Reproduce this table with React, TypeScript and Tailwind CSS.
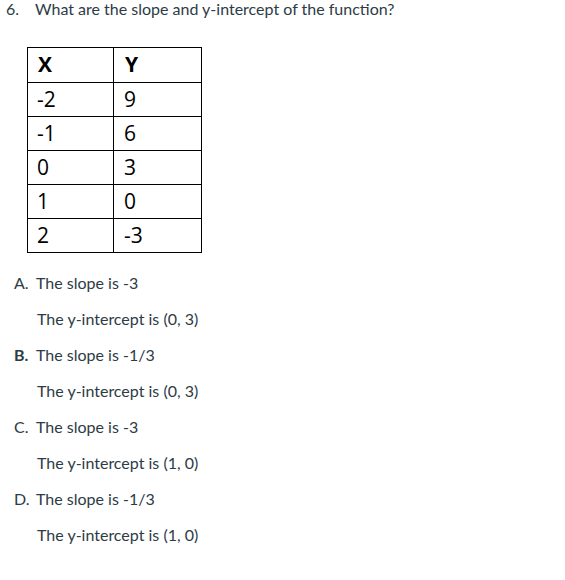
import React from 'react';

const rows: [string, string][] = [
  ['-2', '9'],
  ['-1', '6'],
  ['0', '3'],
  ['1', '0'],
  ['2', '-3'],
];

const options = [
  { letter: 'A.', slope: '-3', point: '(0, 3)', bold: false },
  { letter: 'B.', slope: '-1/3', point: '(0, 3)', bold: true },
  { letter: 'C.', slope: '-3', point: '(1, 0)', bold: false },
  { letter: 'D.', slope: '-1/3', point: '(1, 0)', bold: false },
];

const App: React.FC = () => {
  return (
    <div className="w-[565px] h-[580px] bg-white text-[#2d3b45] font-['Lato',sans-serif] text-[16px]">
      {/* Question */}
      <p className="pl-[6px] leading-[18px]">
        <span className="inline-block w-[29px]">6.</span>What are the slope and y-intercept of the function?
      </p>

      {/* Table */}
      <table className="ml-[27px] mt-[29px] border-collapse text-black font-['Open_Sans',sans-serif] text-[21px]">
        <tbody>
          <tr className="h-[35px]">
            <td className="w-[86px] border border-black pl-[10px] text-left font-bold">X</td>
            <td className="w-[88px] border border-black pl-[11px] text-left font-bold">Y</td>
          </tr>
          {rows.map(([x, y]) => (
            <tr key={x} className="h-[34px]">
              <td className="border border-black pl-[9px] text-left">{x}</td>
              <td className="border border-black pl-[10px] text-left">{y}</td>
            </tr>
          ))}
        </tbody>
      </table>

      {/* Answer choices */}
      <div className="mt-[12px] flex flex-col">
        {options.map((o) => (
          <div key={o.letter} className="flex flex-col">
            <div className="flex h-[36px] items-center pl-[14px]">
              <span className={`w-[22px] ${o.bold ? 'font-bold' : ''}`}>{o.letter}</span>
              <span>The slope is {o.slope}</span>
            </div>
            <div className="flex h-[36px] items-center pl-[37px]">The y-intercept is {o.point}</div>
          </div>
        ))}
      </div>
    </div>
  );
};

export default App;
